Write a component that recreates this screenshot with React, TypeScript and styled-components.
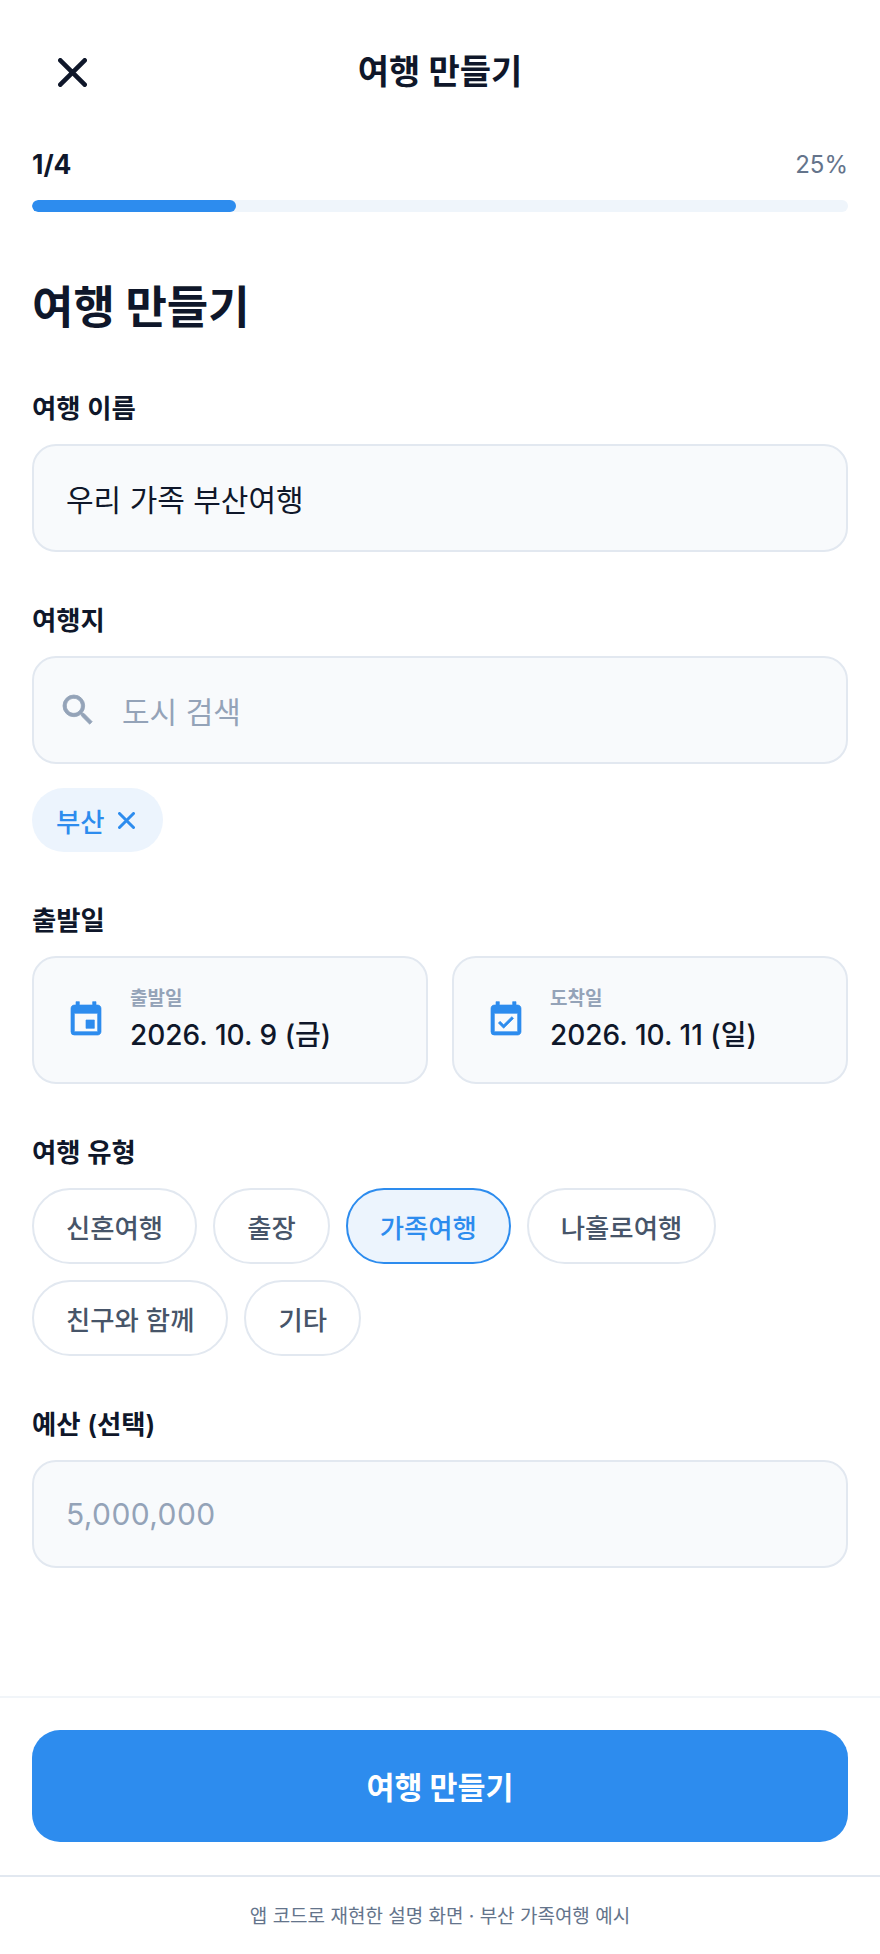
import React from 'react';
import styled, { createGlobalStyle } from 'styled-components';
import { MdSearch, MdEvent, MdEventAvailable } from 'react-icons/md';

const GlobalStyle = createGlobalStyle`
  html, body {
    margin: 0;
    padding: 0;
    background: #fff;
    font-family: Inter, "Noto Sans CJK KR", sans-serif;
    color: #0f172a;
  }
  * { box-sizing: border-box; }
`;

const Page = styled.div`
  width: 880px;
  height: 1954px;
  display: flex;
  flex-direction: column;
`;

const Header = styled.header`
  height: 144px;
  flex: none;
  display: grid;
  grid-template-columns: 144px 1fr 144px;
  align-items: center;
`;

const CloseButton = styled.button`
  width: 144px;
  height: 144px;
  border: 0;
  background: none;
  padding: 0;
  display: flex;
  align-items: center;
  justify-content: center;
  color: #0f172a;
`;

const HeaderTitle = styled.h1`
  margin: 0;
  text-align: center;
  font-size: 34px;
  font-weight: 700;
  line-height: 44px;
`;

const Main = styled.main`
  flex: 1;
  padding: 0 32px;
  display: flex;
  flex-direction: column;
`;

const ProgressRow = styled.div`
  display: flex;
  justify-content: space-between;
  align-items: center;
  height: 40px;
`;

const StepText = styled.span`
  font-size: 26.4px;
  font-weight: 700;
`;

const PercentText = styled.span`
  font-size: 24px;
  color: #64748b;
`;

const Track = styled.div`
  height: 12px;
  margin-top: 16px;
  border-radius: 6px;
  background: #eff5fb;
  overflow: hidden;
`;

const Fill = styled.div`
  height: 100%;
  border-radius: 6px;
  background: #2d8cee;
`;

const PageTitle = styled.h2`
  margin: 64px 0 0;
  font-size: 45px;
  line-height: 64px;
  font-weight: 700;
`;

const Label = styled.label`
  display: block;
  font-size: 26.4px;
  line-height: 36px;
  font-weight: 600;
  margin: 50px 0 18px;
`;

const Field = styled.div`
  height: 108px;
  display: flex;
  align-items: center;
  gap: 24px;
  padding: 0 32px 1px;
  border: 2px solid #e2e8f0;
  border-radius: 24px;
  background: #f8fafc;
  font-size: 30px;
`;

// the material glyphs read too thin at this size; thicken only the drawn paths
const SearchField = styled(Field)`
  padding-left: 24px;
  svg { color: #94a3b8; font-size: 40px; flex: none; }
  svg path:not([fill='none']) { stroke: currentColor; stroke-width: 0.5; }
`;

const Placeholder = styled.span`
  color: #94a3b8;
`;

const NumberPlaceholder = styled(Placeholder)`
  letter-spacing: 0.4px;
`;

const SelectedChip = styled.div`
  align-self: flex-start;
  height: 64px;
  margin-top: 24px;
  padding: 0 28px 0 24px;
  display: flex;
  align-items: center;
  gap: 13px;
  border-radius: 32px;
  background: #ecf4fd;
  color: #2d8cee;
  font-size: 26.4px;
  font-weight: 500;
`;

const DateRow = styled.div`
  display: grid;
  grid-template-columns: 1fr 1fr;
  gap: 24px;
`;

const DateCard = styled.div`
  height: 128px;
  display: flex;
  align-items: center;
  gap: 24px;
  padding: 0 32px;
  border: 2px solid #e2e8f0;
  border-radius: 24px;
  background: #f8fafc;
  svg { color: #2d8cee; font-size: 40px; flex: none; }
  svg path:not([fill='none']) { stroke: currentColor; stroke-width: 0.4; }
`;

const DateText = styled.div`
  display: flex;
  flex-direction: column;
  gap: 4px;
`;

const DateLabel = styled.span`
  font-size: 19px;
  line-height: 26px;
  font-weight: 700;
  color: #94a3b8;
`;

const DateValue = styled.span`
  font-size: 28px;
  line-height: 38px;
  font-weight: 500;
`;

const ChipWrap = styled.div`
  display: flex;
  flex-wrap: wrap;
  gap: 16px;
`;

const TypeChip = styled.button<{ $active?: boolean }>`
  height: 76px;
  padding: 0 32px;
  border-radius: 38px;
  border: 2px solid ${(p) => (p.$active ? '#2d8cee' : '#e2e8f0')};
  background: ${(p) => (p.$active ? '#ecf4fd' : '#fff')};
  color: ${(p) => (p.$active ? '#2d8cee' : '#475569')};
  font-family: inherit;
  font-size: 26.4px;
  font-weight: 500;
`;

const ActionBar = styled.div`
  flex: none;
  border-top: 2px solid #f1f5f9;
  padding: 32px 32px 33px;
`;

const SubmitButton = styled.button`
  width: 100%;
  height: 112px;
  border: 0;
  border-radius: 28px;
  background: #2d8cee;
  color: #fff;
  font-family: inherit;
  font-size: 30.4px;
  font-weight: 700;
`;

const Footer = styled.footer`
  flex: none;
  height: 79px;
  padding-bottom: 3px;
  border-top: 2px solid #e2e8f0;
  display: flex;
  align-items: center;
  justify-content: center;
  font-size: 19px;
  color: #64748b;
`;

const tripTypes = ['신혼여행', '출장', '가족여행', '나홀로여행', '친구와 함께', '기타'];

// material close is too thin next to the reference, so this one is drawn
const CloseIcon = ({ size, weight }: { size: number; weight: number }) => (
  <svg width={size} height={size} viewBox={`0 0 ${size} ${size}`} fill="none">
    <path
      d={`M${weight / 2} ${weight / 2}L${size - weight / 2} ${size - weight / 2}M${size - weight / 2} ${weight / 2}L${weight / 2} ${size - weight / 2}`}
      stroke="currentColor"
      strokeWidth={weight}
      strokeLinecap="round"
    />
  </svg>
);

export default function App() {
  return (
    <Page>
      <GlobalStyle />
      <Header>
        <CloseButton aria-label="닫기">
          <CloseIcon size={29} weight={4.6} />
        </CloseButton>
        <HeaderTitle>여행 만들기</HeaderTitle>
      </Header>
      <Main>
        <ProgressRow>
          <StepText>1/4</StepText>
          <PercentText>25%</PercentText>
        </ProgressRow>
        <Track>
          <Fill style={{ width: `${(1 / 4) * 100}%` }} />
        </Track>
        <PageTitle>여행 만들기</PageTitle>
        <Label>여행 이름</Label>
        <Field>우리 가족 부산여행</Field>
        <Label>여행지</Label>
        <SearchField>
          <MdSearch />
          <Placeholder>도시 검색</Placeholder>
        </SearchField>
        <SelectedChip>
          부산
          <CloseIcon size={17} weight={3} />
        </SelectedChip>
        <Label>출발일</Label>
        <DateRow>
          <DateCard>
            <MdEvent />
            <DateText>
              <DateLabel>출발일</DateLabel>
              <DateValue>2026. 10. 9 (금)</DateValue>
            </DateText>
          </DateCard>
          <DateCard>
            <MdEventAvailable />
            <DateText>
              <DateLabel>도착일</DateLabel>
              <DateValue>2026. 10. 11 (일)</DateValue>
            </DateText>
          </DateCard>
        </DateRow>
        <Label>여행 유형</Label>
        <ChipWrap>
          {tripTypes.map((t) => (
            <TypeChip key={t} $active={t === '가족여행'}>
              {t}
            </TypeChip>
          ))}
        </ChipWrap>
        <Label>예산 (선택)</Label>
        <Field>
          <NumberPlaceholder>5,000,000</NumberPlaceholder>
        </Field>
      </Main>
      <ActionBar>
        <SubmitButton>여행 만들기</SubmitButton>
      </ActionBar>
      <Footer>앱 코드로 재현한 설명 화면 · 부산 가족여행 예시</Footer>
    </Page>
  );
}
